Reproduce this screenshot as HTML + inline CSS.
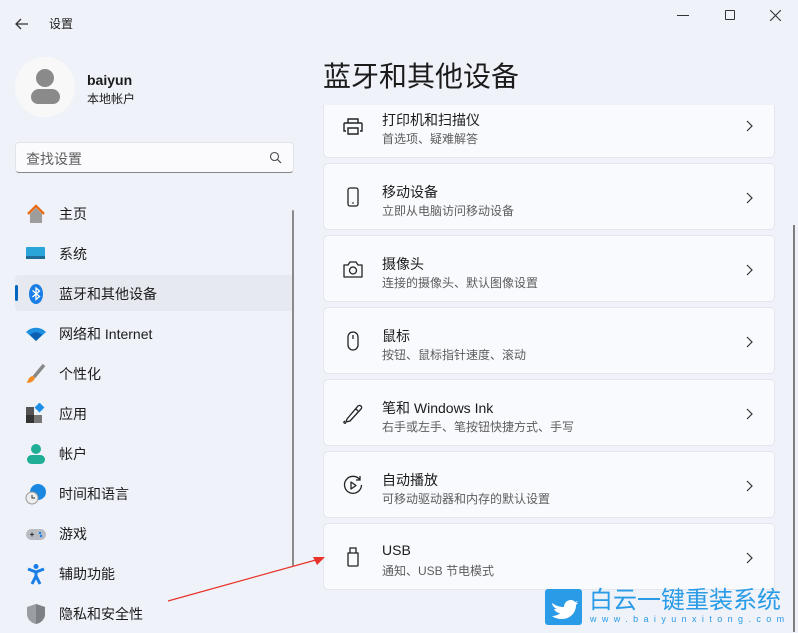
<!DOCTYPE html>
<html><head><meta charset="utf-8"><style>
*{margin:0;padding:0;box-sizing:border-box}
body{width:798px;height:632px;overflow:hidden;background:#eff3f9;font-family:"Liberation Sans","Noto Sans CJK SC",sans-serif;color:#1b1b1b;position:relative}
.a{position:absolute}
.nav{position:absolute;left:15px;width:278px;height:38px;display:flex;align-items:center;font-size:14px}
.nav .ic{width:22px;height:22px;margin-left:10px;margin-right:12px;display:flex;align-items:center;justify-content:center}
.card{position:absolute;left:323px;width:452px;height:67px;background:#f9fafd;border:1px solid #e3e6ec;border-radius:5px}
.card .t{position:absolute;left:58px;top:18px;font-size:14px;color:#1b1b1b}
.card .s{position:absolute;left:58px;top:38px;font-size:12px;color:#5d5d5d}
.card .i{position:absolute;left:18px;top:22px;width:22px;height:22px}
.card .c{position:absolute;right:18px;top:27px;width:14px;height:14px}
</style></head><body>
<svg class="a" style="left:14px;top:16px" width="16" height="16" viewBox="0 0 16 16"><path d="M14 8H2M7 3L2 8l5 5" fill="none" stroke="#333" stroke-width="1.3"/></svg>
<div class="a" style="left:49px;top:15px;font-size:12px">设置</div>
<div class="a" style="left:677px;top:15px;width:12px;border-top:1px solid #333"></div>
<div class="a" style="left:725px;top:10px;width:10px;height:10px;border:1px solid #333;border-radius:1px"></div>
<svg class="a" style="left:770px;top:10px" width="11" height="11"><path d="M0 0L11 11M11 0L0 11" stroke="#333" stroke-width="1.1"/></svg>

<div class="a" style="left:15px;top:57px;width:60px;height:60px;border-radius:50%;background:#f8f8f8"></div>
<div class="a" style="left:36px;top:69px;width:18px;height:18px;border-radius:50%;background:#8a8a8a"></div>
<div class="a" style="left:31px;top:89px;width:29px;height:15px;border-radius:8px 8px 7px 7px;background:#8a8a8a"></div>
<div class="a" style="left:87px;top:72px;font-size:14px;font-weight:bold">baiyun</div>
<div class="a" style="left:87px;top:90px;font-size:12px">本地帐户</div>

<div class="a" style="left:15px;top:142px;width:279px;height:31px;background:#fbfbfd;border:1px solid #e2e4e8;border-bottom:1px solid #888;border-radius:4px"></div>
<div class="a" style="left:26px;top:149px;font-size:14px;color:#5f5f5f">查找设置</div>
<svg class="a" style="left:269px;top:151px" width="13" height="13"><circle cx="5.5" cy="5.5" r="4" fill="none" stroke="#444" stroke-width="1.1"/><path d="M8.5 8.5L12 12" stroke="#444" stroke-width="1.2"/></svg>

<div class="a" style="left:15px;top:275px;width:278px;height:36px;background:#e6e9ef;border-radius:4px"></div>
<div class="a" style="left:15px;top:285px;width:3px;height:16px;background:#0067c0;border-radius:2px"></div>
<div class="a" style="left:292px;top:210px;width:2px;height:356px;background:#8a8a8a;border-radius:1px"></div>

<div class="nav" style="top:195px"><span class="ic"><svg width="22" height="22"><path d="M3 11L11 3l8 8" fill="none" stroke="#e86c1a" stroke-width="2.5"/><path d="M5 11l6-6 6 6v9H5z" fill="#9d9d9d"/></svg></span>主页</div>
<div class="nav" style="top:235px"><span class="ic"><svg width="22" height="22"><rect x="1" y="4" width="19" height="12" rx="1" fill="#2aa5d8"/><rect x="1" y="13" width="19" height="3" fill="#1d6d98"/></svg></span>系统</div>
<div class="nav" style="top:275px"><span class="ic"><svg width="22" height="22"><ellipse cx="11" cy="11" rx="7" ry="10" fill="#1a7ee6"/><path d="M7.5 7.5l7 6-3.5 3V5l3.5 3-7 6" fill="none" stroke="#fff" stroke-width="1.3"/></svg></span>蓝牙和其他设备</div>
<div class="nav" style="top:315px"><span class="ic"><svg width="22" height="22"><path d="M1 9a14 14 0 0 1 20 0L11 18z" fill="#1e8fe0"/><path d="M5 12a8 8 0 0 1 12 0L11 18z" fill="#0b5fb0"/></svg></span>网络和 Internet</div>
<div class="nav" style="top:355px"><span class="ic"><svg width="22" height="22"><path d="M19 2L9 14" stroke="#888" stroke-width="3.5"/><path d="M8 13c-3 0-5 3-6 7 4 0 7-2 8-5z" fill="#f08a24"/></svg></span>个性化</div>
<div class="nav" style="top:395px"><span class="ic"><svg width="22" height="22"><rect x="1" y="4" width="8" height="8" fill="#555"/><rect x="1" y="12" width="8" height="8" fill="#333"/><rect x="9" y="12" width="8" height="8" fill="#777"/><rect x="11" y="1" width="7" height="7" transform="rotate(45 14.5 4.5)" fill="#1d8fe6"/></svg></span>应用</div>
<div class="nav" style="top:435px"><span class="ic"><svg width="22" height="22"><circle cx="11" cy="6" r="5" fill="#1fae96"/><rect x="2" y="12" width="18" height="9" rx="4.5" fill="#1fae96"/></svg></span>帐户</div>
<div class="nav" style="top:475px"><span class="ic"><svg width="22" height="22"><circle cx="13" cy="9" r="8" fill="#1a88e0"/><circle cx="7" cy="15" r="6" fill="#eee" stroke="#999"/><path d="M7 12v3h3" stroke="#333" fill="none"/></svg></span>时间和语言</div>
<div class="nav" style="top:515px"><span class="ic"><svg width="22" height="22"><rect x="1" y="6" width="20" height="11" rx="5.5" fill="#b9bdc3"/><path d="M5 11.5h4M7 9.5v4" stroke="#333"/><circle cx="15" cy="10" r="1.2" fill="#1a7ee6"/><circle cx="16" cy="13" r="1.2" fill="#1a7ee6"/></svg></span>游戏</div>
<div class="nav" style="top:555px"><span class="ic"><svg width="22" height="22"><circle cx="11" cy="3.5" r="2.5" fill="#1a7ee6"/><path d="M3 6l8 3 8-3M11 9v4l-4 8M11 13l4 8" stroke="#1a7ee6" stroke-width="3" fill="none"/></svg></span>辅助功能</div>
<div class="nav" style="top:595px"><span class="ic"><svg width="22" height="22"><path d="M11 1l9 3v7c0 5-4 9-9 10-5-1-9-5-9-10V4z" fill="#9a9da2"/><path d="M11 1l9 3v7c0 5-4 9-9 10z" fill="#7d8085"/></svg></span>隐私和安全性</div>

<div class="a" style="left:323px;top:55px;font-size:28px;color:#1b1b1b">蓝牙和其他设备</div>

<div style="position:absolute;left:0;top:105px;width:798px;height:527px;overflow:hidden">
<div class="card" style="top:-14px"><svg class="i" style="top:23px" viewBox="0 0 22 22"><path d="M6 8V4h10v4M4 16H2V9a1 1 0 0 1 1-1h16a1 1 0 0 1 1 1v7h-2M6 13h10v6H6z" fill="none" stroke="#222" stroke-width="1.4"/></svg><div class="t">打印机和扫描仪</div><div class="s">首选项、疑难解答</div><svg class="c" viewBox="0 0 14 14"><path d="M5 2l5 5-5 5" fill="none" stroke="#333" stroke-width="1.2"/></svg></div>
</div>
<div class="card" style="top:163px"><svg class="i" viewBox="0 0 22 22"><rect x="6" y="2" width="10" height="18" rx="2" fill="none" stroke="#222" stroke-width="1.3"/><path d="M10 17h2" stroke="#222"/></svg><div class="t">移动设备</div><div class="s">立即从电脑访问移动设备</div><svg class="c" viewBox="0 0 14 14"><path d="M5 2l5 5-5 5" fill="none" stroke="#333" stroke-width="1.2"/></svg></div>
<div class="card" style="top:235px"><svg class="i" viewBox="0 0 22 22"><path d="M2 7h4l2-3h6l2 3h4v12H2z" fill="none" stroke="#222" stroke-width="1.3" stroke-linejoin="round"/><circle cx="11" cy="12.5" r="3.5" fill="none" stroke="#222" stroke-width="1.3"/></svg><div class="t">摄像头</div><div class="s">连接的摄像头、默认图像设置</div><svg class="c" viewBox="0 0 14 14"><path d="M5 2l5 5-5 5" fill="none" stroke="#333" stroke-width="1.2"/></svg></div>
<div class="card" style="top:307px"><svg class="i" viewBox="0 0 22 22"><rect x="6" y="2" width="10" height="18" rx="5" fill="none" stroke="#222" stroke-width="1.3"/><path d="M11 5v4" stroke="#222" stroke-width="1.3"/></svg><div class="t">鼠标</div><div class="s">按钮、鼠标指针速度、滚动</div><svg class="c" viewBox="0 0 14 14"><path d="M5 2l5 5-5 5" fill="none" stroke="#333" stroke-width="1.2"/></svg></div>
<div class="card" style="top:379px"><svg class="i" viewBox="0 0 22 22"><path d="M5 17L16 4a2 2 0 0 1 3 3L8 19l-4 1zM14 7l2 2M3 19c-2 1-1 3 1 2" fill="none" stroke="#222" stroke-width="1.3"/></svg><div class="t">笔和 Windows Ink</div><div class="s">右手或左手、笔按钮快捷方式、手写</div><svg class="c" viewBox="0 0 14 14"><path d="M5 2l5 5-5 5" fill="none" stroke="#333" stroke-width="1.2"/></svg></div>
<div class="card" style="top:451px"><svg class="i" viewBox="0 0 22 22"><path d="M18 6A8.5 8.5 0 1 0 19.5 11M18 2v4h-4" fill="none" stroke="#222" stroke-width="1.3"/><path d="M9 8v7l5-3.5z" fill="none" stroke="#222" stroke-width="1.3" stroke-linejoin="round"/></svg><div class="t">自动播放</div><div class="s">可移动驱动器和内存的默认设置</div><svg class="c" viewBox="0 0 14 14"><path d="M5 2l5 5-5 5" fill="none" stroke="#333" stroke-width="1.2"/></svg></div>
<div class="card" style="top:523px"><svg class="i" viewBox="0 0 22 22"><path d="M8 7V2h6v5M6 7h10v12a1 1 0 0 1-1 1H7a1 1 0 0 1-1-1z" fill="none" stroke="#222" stroke-width="1.3"/></svg><div class="t">USB</div><div class="s">通知、USB 节电模式</div><svg class="c" viewBox="0 0 14 14"><path d="M5 2l5 5-5 5" fill="none" stroke="#333" stroke-width="1.2"/></svg></div>

<div class="a" style="left:793px;top:225px;width:2px;height:407px;background:#7d7d7d"></div>

<svg class="a" style="left:165px;top:552px" width="165" height="52"><path d="M3 49L158 6" stroke="#e8322a" stroke-width="1.2"/><path d="M160 5l-12 0 4 8z" fill="#e8322a"/></svg>

<div class="a" style="left:545px;top:589px;width:37px;height:36px;background:#2a9be6;border-radius:3px"></div>
<svg class="a" style="left:549px;top:593px" width="30" height="28"><path d="M3 10c4 3 8 4 12 4 0-4 3-7 7-7 2 0 3 1 4 2l3-1-2 2 2 0-2 2c0 8-6 14-14 14-4 0-7-1-10-3 3 0 6-1 8-3-3 0-5-2-6-4h3c-3-1-5-4-5-6z" fill="#fff"/></svg>
<div class="a" style="left:589px;top:587px;font-size:24px;color:#2a9be6;letter-spacing:0px;line-height:28px">白云一键重装系统</div>
<div class="a" style="left:590px;top:614px;font-size:9px;color:#2a9be6;letter-spacing:5.4px">www.baiyunxitong.com</div>
</body></html>
